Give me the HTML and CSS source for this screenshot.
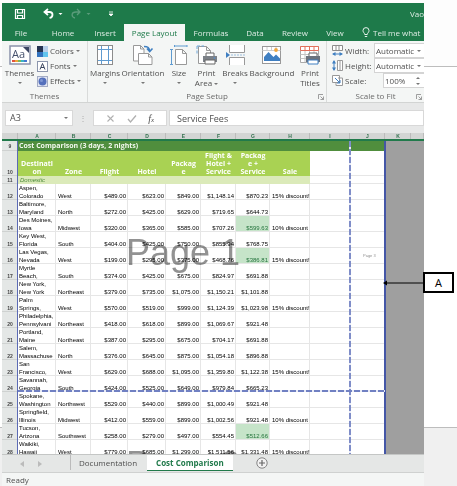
FILE: index.html
```html
<!DOCTYPE html>
<html lang="en">
<head>
<meta charset="utf-8">
<title>Cost Comparison</title>
<link rel="stylesheet" href="styles.css">
</head>
<body>
<div class="app">
  <header class="titlebar">
    <button class="qat save" aria-label="Save"><svg width="12" height="12" viewBox="0 0 12 12"><path d="M1.500 1.500h9v9h-9zM3.500 1.500v3.500h5v-3.500M3.500 10.500v-3h5v3" fill="none" stroke="#fff" stroke-width="1.200"/></svg></button>
    <button class="qat undo" aria-label="Undo"><svg width="20" height="12" viewBox="0 0 20 12"><path d="M5 1L1.500 4 5 7M2 4h4.500c4 0 4 5 0 6" fill="none" stroke="#fff" stroke-width="1.800"/><path d="M15.500 5h4l-2 2z" fill="#fff"/></svg></button>
    <button class="qat redo" aria-label="Redo"><svg width="20" height="12" viewBox="0 0 20 12"><path d="M6 1l3 3-3 3M9 4H5C0 4 0 9 4 10" fill="none" stroke="#5b9c7b" stroke-width="1.300"/><path d="M15.500 5h4l-2 2z" fill="#5b9c7b"/></svg></button>
    <button class="qat more" aria-label="Customize"><svg width="6" height="8" viewBox="0 0 6 8"><path d="M1 2h4M1 4h4l-2 2z" fill="#fff" stroke="#fff" stroke-width=".8"/></svg></button>
    <span class="doc-title">Vao</span>
  </header>
  <nav class="tabs">
    <a href="#" class="w38">File</a>
    <a href="#" class="w46">Home</a>
    <a href="#" class="w38">Insert</a>
    <a href="#" class="w61 current">Page Layout</a>
    <a href="#" class="w52">Formulas</a>
    <a href="#" class="w36">Data</a>
    <a href="#" class="w44">Review</a>
    <a href="#" class="w36">View</a>
    <a href="#" class="tell"><svg width="8" height="11" viewBox="0 0 8 11"><path d="M2.700 7.500C2.700 6 1 5.500 1 3.600a3 3 0 0 1 6 0C7 5.500 5.300 6 5.300 7.500zM2.800 9.500h2.400" fill="none" stroke="#e6f1eb"/></svg>Tell me what</a>
  </nav>

  <section class="ribbon">
    <div class="group themes">
      <div class="group-body">
        <button class="big"><svg width="22" height="20" viewBox="0 0 22 20"><rect x="1" y="1" width="20" height="18" fill="#fff" stroke="#8b93aa" stroke-width="1.500"/><path d="M14 2h6v6z" fill="#3b4562"/><text x="3" y="13" class="aa">Aa</text><path d="M3 16h3" stroke="#e0523f" stroke-width="2"/><path d="M6 16h3" stroke="#eda63a" stroke-width="2"/><path d="M9 16h3" stroke="#7cb560" stroke-width="2"/><path d="M12 16h3" stroke="#3bb3c4" stroke-width="2"/><path d="M15 16h3" stroke="#4877cf" stroke-width="2"/></svg><span>Themes</span><i class="caret"></i></button>
        <div class="stack">
          <button class="small"><svg width="11" height="11" viewBox="0 0 11 11"><path d="M0 0h6v6H0z" fill="#263451"/><path d="M6 0h5v6H6z" fill="#b8cfe9"/><path d="M0 6h6v5H0z" fill="#3474bf"/><path d="M6 6h5v5H6z" fill="#62c5ee"/></svg>Colors<i class="caret"></i></button>
          <button class="small"><svg width="11" height="11" viewBox="0 0 11 11"><rect x=".5" y=".5" width="10" height="10" fill="#fff" stroke="#8c96ad"/><path d="M3 8.500L5.500 2.500 8 8.500M4 6.500h3" fill="none" stroke="#39445d"/></svg>Fonts<i class="caret"></i></button>
          <button class="small"><svg width="11" height="11" viewBox="0 0 11 11"><rect x=".5" y=".5" width="10" height="10" fill="#e4e8f4" stroke="#a3abc4"/><circle cx="5.500" cy="5.500" r="4" fill="#5470bc"/><circle cx="4.500" cy="4.500" r="1.500" fill="#7f97d4"/></svg>Effects<i class="caret"></i></button>
        </div>
      </div>
      <div class="group-name">Themes</div>
    </div>

    <div class="group setup">
      <div class="group-body setup-grid">
        <button class="big"><svg width="16" height="20" viewBox="0 0 16 20"><rect x=".5" y=".5" width="15" height="19" fill="#fff" stroke="#8c8c8c"/><path d="M4.500 1v18M11.500 1v18M1 4.500h14M1 15.500h14" stroke="#5f9bd0"/></svg><span>Margins</span><i class="caret"></i></button>
        <button class="big"><svg width="22" height="20" viewBox="0 0 22 20"><path d="M1.500 .5h7l3.500 3.500v12H1.500zM8.500 .5V4H12" fill="#fff" stroke="#999"/><path d="M6.500 8.500h10l3.500 3.500v7.500H6.500zM16.500 8.500V12H20" fill="#fff" stroke="#999"/><path d="M12 1.500c4 0 5.500 1 5.500 4.500M15 3.500l2.700 3 2.800-3" fill="none" stroke="#3f7fc1" stroke-width="1.600"/></svg><span>Orientation</span><i class="caret"></i></button>
        <button class="big"><svg width="18" height="20" viewBox="0 0 18 20"><path d="M5.500 4.500h7l4 4v11h-11zM12.500 4.500v4h4" fill="#fff" stroke="#999"/><path d="M5 1h12M4.500 0v2M17 0v2M1.500 5v15M0 4.500h3M0 19.500h3" stroke="#5f9bd0"/></svg><span>Size</span><i class="caret"></i></button>
        <button class="big"><svg width="22" height="20" viewBox="0 0 22 20"><path d="M2.500 1.500h8l4 4v13h-12zM10.500 1.500v4h4" fill="#fff" stroke="#999"/><path d="M1 1v8M1 1h7" stroke="#6fa6d8" stroke-dasharray="3 1.500"/><path d="M10 8h8v4h-8z" fill="#fff" stroke="#666"/><path d="M7 11h14v6H7z" fill="#7c8188"/><path d="M9 15h10v4H9z" fill="#fff" stroke="#666"/><circle cx="18.500" cy="13" r=".8" fill="#4b8fd6"/></svg><span>Print</span><span>Area <i class="caret"></i></span></button>
        <button class="big"><svg width="19" height="20" viewBox="0 0 19 20"><path d="M3.500 0v7.500h15V0M3.500 20v-7.500h15V20" fill="#fff" stroke="#999"/><path d="M5 10h14" stroke="#9bbede" stroke-dasharray="2 1"/><path d="M0 7l4 3-4 3z" fill="#3f7fc1"/></svg><span>Breaks</span><i class="caret"></i></button>
        <button class="big"><svg width="20" height="20" viewBox="0 0 20 20"><rect x=".5" y="1.500" width="18" height="17" fill="#fff" stroke="#999"/><path d="M.5 5.500h18M5 2v4M9.500 2v4M14 2v4" stroke="#ccc"/><path d="M2 16v-4l4.500-5 5 5 2.500-2.500 4 4V16z" fill="#3f7fc1"/><circle cx="14" cy="5" r="1.900" fill="#f0a53b"/></svg><span>Background</span></button>
        <button class="big"><svg width="22" height="20" viewBox="0 0 22 20"><path d="M1.500 1.500h18v16h-18z" fill="#fff" stroke="#aaa"/><path d="M1.500 1.500h18v4h-18zM6 1.500v4M10.500 1.500v4M15 1.500v4" fill="#fff" stroke="#e2705c"/><path d="M1.500 9.500h18M1.500 13.500h18M6 6v11M10.500 6v11M15 6v11" stroke="#c4c4c4"/><path d="M10 8h8v4h-8z" fill="#fff" stroke="#666"/><path d="M7 11h14v6H7z" fill="#6c737d"/><path d="M9 15h10v4H9z" fill="#fff" stroke="#3f7fc1"/></svg><span>Print</span><span>Titles</span></button>
      </div>
      <div class="group-name">Page Setup<svg class="launcher" width="6" height="6" viewBox="0 0 6 6"><path d="M.5 5V.5H5M2.500 2.500l3 3M5.500 2.500v3h-3" fill="none" stroke="#888" stroke-width=".8"/></svg></div>
    </div>

    <div class="group scale">
      <div class="group-body scale-rows">
        <div class="field"><label for="width"><svg width="11" height="11" viewBox="0 0 11 11"><path d="M.5 .5h10v5H.5zM4 1v4M7 1v4" fill="#fff" stroke="#8c8c8c"/><path d="M1 9h9" stroke="#3f7fc1"/><path d="M3.500 7v4L0 9zM7.500 7v4L11 9z" fill="#3f7fc1"/></svg>Width:</label><span class="pick"><select id="width"><option>Automatic</option></select><i class="caret"></i></span></div>
        <div class="field"><label for="height"><svg width="11" height="11" viewBox="0 0 11 11"><path d="M5.500 .5h5v10h-5zM8 1v9" fill="#fff" stroke="#999"/><path d="M2 1v9" stroke="#3f7fc1"/><path d="M0 3.500h4L2 0zM0 7.500h4L2 11z" fill="#3f7fc1"/></svg>Height:</label><span class="pick"><select id="height"><option>Automatic</option></select><i class="caret"></i></span></div>
        <div class="field"><label for="scale"><svg width="11" height="11" viewBox="0 0 11 11"><path d="M.5 .5h7v7h-7zM6 3h4.500v7.500H4V8" fill="#fff" stroke="#999"/><path d="M3 3l5 5M8 5v3H5" fill="none" stroke="#3f7fc1"/></svg>Scale:</label><span class="pick spin"><input id="scale" value="100%"><span class="arrows"><i class="caret up"></i><i class="caret"></i></span></span></div>
      </div>
      <div class="group-name">Scale to Fit<svg class="launcher" width="6" height="6" viewBox="0 0 6 6"><path d="M.5 5V.5H5M2.500 2.500l3 3M5.500 2.500v3h-3" fill="none" stroke="#888" stroke-width=".8"/></svg></div>
    </div>
  </section>

  <section class="formula-bar">
    <span class="box name-box"><input aria-label="Name box" value="A3"><i class="caret"></i></span>
    <span class="dots">⋮</span>
    <span class="box fx"><svg width="9" height="9" viewBox="0 0 9 9"><path d="M1.500 1.500l6 6M7.500 1.500l-6 6" stroke="#b0b0b0" stroke-width="1.100"/></svg><svg width="10" height="9" viewBox="0 0 10 9"><path d="M1 5l2.500 3L9 1.500" fill="none" stroke="#b0b0b0" stroke-width="1.300"/></svg><em>f<small>x</small></em></span>
    <input class="box formula" aria-label="Formula" value="Service Fees">
  </section>

  <main class="sheet">
    <table>
      <colgroup><col class="c16"><col class="c38"><col class="c35"><col class="c37"><col class="c38"><col class="c35"><col class="c35"><col class="c34"><col class="c40"><col class="c40"><col class="c35"><col class="c26"><col></colgroup>
      <thead>
        <tr><th></th><th>A</th><th>B</th><th>C</th><th>D</th><th>E</th><th>F</th><th>G</th><th>H</th><th>I</th><th>J</th><th>K</th><th></th></tr>
      </thead>
      <tbody>
        <tr class="title"><th>9</th><td colspan="10">Cost Comparison (3 days, 2 nights)</td><td class="off"></td><td class="off"></td></tr>
        <tr class="heads"><th>10</th><td>Destinati<br>on</td><td>Zone</td><td>Flight</td><td>Hotel</td><td>Packag<br>e</td><td>Flight &amp;<br>Hotel +<br>Service</td><td>Packag<br>e +<br>Service</td><td>Sale</td><td class="blank"></td><td class="blank"></td><td class="off"></td><td class="off"></td></tr>
        <tr class="section"><th>11</th><td colspan="8">Domestic</td><td class="blank"></td><td class="blank"></td><td class="off"></td><td class="off"></td></tr>
        <tr><th>12</th><td>Aspen,<br>Colorado</td><td>West</td><td>$489.00</td><td>$623.00</td><td>$849.00</td><td>$1,148.14</td><td>$870.23</td><td>15% discount!</td><td></td><td></td><td class="off"></td><td class="off"></td></tr>
        <tr><th>13</th><td>Baltimore,<br>Maryland</td><td>North</td><td>$272.00</td><td>$425.00</td><td>$629.00</td><td>$719.65</td><td>$644.73</td><td></td><td></td><td></td><td class="off"></td><td class="off"></td></tr>
        <tr><th>14</th><td>Des Moines,<br>Iowa</td><td>Midwest</td><td>$320.00</td><td>$365.00</td><td>$585.00</td><td>$707.26</td><td class="good">$599.63</td><td>10% discount</td><td></td><td></td><td class="off"></td><td class="off"></td></tr>
        <tr><th>15</th><td>Key West,<br>Florida</td><td>South</td><td>$404.00</td><td>$425.00</td><td>$750.00</td><td>$855.94</td><td>$768.75</td><td></td><td></td><td></td><td class="off"></td><td class="off"></td></tr>
        <tr><th>16</th><td>Las Vegas,<br>Nevada</td><td>West</td><td>$199.00</td><td>$295.00</td><td>$375.00</td><td>$468.76</td><td class="good">$386.81</td><td>15% discount!</td><td></td><td></td><td class="off"></td><td class="off"></td></tr>
        <tr><th>17</th><td>Myrtle<br>Beach,</td><td>South</td><td>$374.00</td><td>$425.00</td><td>$675.00</td><td>$824.97</td><td>$691.88</td><td></td><td></td><td></td><td class="off"></td><td class="off"></td></tr>
        <tr><th>18</th><td>New York,<br>New York</td><td>Northeast</td><td>$379.00</td><td>$735.00</td><td>$1,075.00</td><td>$1,150.21</td><td>$1,101.88</td><td></td><td></td><td></td><td class="off"></td><td class="off"></td></tr>
        <tr><th>19</th><td>Palm<br>Springs,</td><td>West</td><td>$570.00</td><td>$519.00</td><td>$999.00</td><td>$1,124.39</td><td>$1,023.98</td><td>15% discount!</td><td></td><td></td><td class="off"></td><td class="off"></td></tr>
        <tr><th>20</th><td>Philadelphia,<br>Pennsylvani</td><td>Northeast</td><td>$418.00</td><td>$618.00</td><td>$899.00</td><td>$1,069.67</td><td>$921.48</td><td></td><td></td><td></td><td class="off"></td><td class="off"></td></tr>
        <tr><th>21</th><td>Portland,<br>Maine</td><td>Northeast</td><td>$387.00</td><td>$295.00</td><td>$675.00</td><td>$704.17</td><td>$691.88</td><td></td><td></td><td></td><td class="off"></td><td class="off"></td></tr>
        <tr><th>22</th><td>Salem,<br>Massachuse</td><td>North</td><td>$376.00</td><td>$645.00</td><td>$875.00</td><td>$1,054.18</td><td>$896.88</td><td></td><td></td><td></td><td class="off"></td><td class="off"></td></tr>
        <tr><th>23</th><td>San<br>Francisco,</td><td>West</td><td>$629.00</td><td>$688.00</td><td>$1,095.00</td><td>$1,359.80</td><td>$1,122.38</td><td>15% discount!</td><td></td><td></td><td class="off"></td><td class="off"></td></tr>
        <tr><th>24</th><td>Savannah,<br>Georgia</td><td>South</td><td>$424.00</td><td>$525.00</td><td>$649.00</td><td>$979.84</td><td>$665.23</td><td></td><td></td><td></td><td class="off"></td><td class="off"></td></tr>
        <tr><th>25</th><td>Spokane,<br>Washington</td><td>Northwest</td><td>$529.00</td><td>$440.00</td><td>$899.00</td><td>$1,000.49</td><td>$921.48</td><td></td><td></td><td></td><td class="off"></td><td class="off"></td></tr>
        <tr><th>26</th><td>Springfield,<br>Illinois</td><td>Midwest</td><td>$412.00</td><td>$559.00</td><td>$899.00</td><td>$1,002.56</td><td>$921.48</td><td>10% discount</td><td></td><td></td><td class="off"></td><td class="off"></td></tr>
        <tr><th>27</th><td>Tucson,<br>Arizona</td><td>Southwest</td><td>$258.00</td><td>$279.00</td><td>$497.00</td><td>$554.45</td><td class="good">$512.66</td><td></td><td></td><td></td><td class="off"></td><td class="off"></td></tr>
        <tr><th>28</th><td>Waikiki,<br>Hawaii</td><td>West</td><td>$779.00</td><td>$685.00</td><td>$1,299.00</td><td>$1,511.56</td><td>$1,331.48</td><td>15% discount!</td><td></td><td></td><td class="off"></td><td class="off"></td></tr>
      </tbody>
    </table>
    <span class="watermark first">Page 1</span>
    <span class="watermark second">Page 2</span>
    <span class="watermark third">Page 3</span>
    <span class="break edge-left"></span>
    <span class="break edge-right"></span>
    <span class="break dash-v"></span>
    <span class="break dash-h"></span>
  </main>

  <nav class="sheet-tabs">
    <button class="arrow" aria-label="Previous sheet"><svg width="4" height="6" viewBox="0 0 4 6"><path d="M4 0v6L0 3z" fill="#bbb"/></svg></button>
    <button class="arrow" aria-label="Next sheet"><svg width="4" height="6" viewBox="0 0 4 6"><path d="M0 0v6l4-3z" fill="#bbb"/></svg></button>
    <a href="#" class="doc-tab">Documentation</a>
    <a href="#" class="active-tab">Cost Comparison</a>
    <button class="add" aria-label="New sheet"><svg width="12" height="12" viewBox="0 0 12 12"><circle cx="6" cy="6" r="5.200" fill="#f2f2f2" stroke="#858585"/><path d="M6 3v6M3 6h6" stroke="#666" stroke-width="1.200"/></svg></button>
  </nav>
  <footer class="status">Ready</footer>
</div>
<div class="callout"><svg width="40" height="8" viewBox="0 0 40 8"><path d="M3 4h37" stroke="#000"/><path d="M0 4l4-2.500v5z"/></svg><span>A</span></div>
</body>
</html>
```

FILE: styles.css
```css
* { box-sizing: border-box; }

body {
  margin: 0;
  padding: 3px 33px 0 2px;
  height: 100vh;
  overflow: hidden;
  position: relative;
  font: 8px/10px "Open Sans", sans-serif;
  color: #505050;
  background: linear-gradient(#fdfdfd 66px, #bdbdbd 66px 67px, #fff 67px 427px, #bdbdbd 427px 428px, #f0f0f0 428px);
}

button, input, select {
  font: inherit;
  color: inherit;
  background: none;
  border: 0;
  padding: 0;
  margin: 0;
  min-width: 0;
  appearance: none;
  outline: 0;
}
a { color: inherit; text-decoration: none; }
svg { display: block; flex: none; }

.app {
  height: 100%;
  display: flex;
  flex-direction: column;
  overflow: hidden;
}
.app > * { flex: none; }

.caret {
  display: inline-block;
  flex: none;
  border: 2px solid transparent;
  border-top-color: #777;
  border-bottom: 0;
}
.caret.up {
  border-top: 0;
  border-bottom: 2px solid #777;
}

/* Title bar and ribbon tabs */
.titlebar {
  height: 21px;
  background: #1e7a4a;
  display: flex;
  align-items: center;
  padding-left: 12px;
  color: #dcebe3;
}
.qat { margin-right: 12px; }
.undo, .redo { margin-left: 5px; margin-right: 5px; }
.redo { margin-left: 3px; }
.more { margin-left: 12px; }
.doc-title { margin-left: auto; }

.tabs {
  height: 17px;
  background: #1e7a4a;
  color: #dcebe3;
  display: flex;
  line-height: 17px;
  white-space: nowrap;
  overflow: hidden;
}
.tabs a { text-align: center; flex: none; }
.tabs .current { background: #f4f6f5; color: #1e7a4a; }
.w36 { width: 36px; }
.w38 { width: 38px; }
.w44 { width: 44px; }
.w46 { width: 46px; }
.w52 { width: 52px; }
.w61 { width: 61px; }
.tabs .tell {
  display: flex;
  align-items: center;
  gap: 3px;
  padding-left: 9px;
}

/* Ribbon */
.ribbon {
  height: 62px;
  display: flex;
  background: #f4f6f5;
  border-bottom: 1px solid #d2d4d3;
}
.group {
  display: flex;
  flex-direction: column;
  justify-content: space-between;
  padding: 3px 0 1px;
}
.group + .group { border-left: 1px solid #d9dbda; }
.themes { width: 85px; }
.setup { width: 239px; }
.scale { flex: 1; min-width: 0; overflow: hidden; }
.group-body { display: flex; }
.group-name {
  position: relative;
  text-align: center;
  color: #6a6a6a;
}
.launcher { position: absolute; right: 2px; top: 3px; }
.big {
  display: flex;
  flex-direction: column;
  align-items: center;
  white-space: nowrap;
}
.big > span { line-height: 10px; }
.big svg { margin: 1px 0 3px; }
.big > .caret { margin-top: 4px; }
.big span .caret { vertical-align: middle; }
.themes .big { width: 35px; }
.stack { display: flex; flex-direction: column; gap: 1px; }
.small { display: flex; align-items: center; gap: 2px; height: 14px; }
.aa { font: 11px "Open Sans", sans-serif; fill: #44506c; }
.setup-grid {
  display: grid;
  grid-template-columns: 30px 46px 26px 29px 28px 46px 30px;
  padding-left: 2px;
  align-items: start;
}
.scale-rows { flex-direction: column; margin-top: -1px; }
.field {
  display: flex;
  justify-content: space-between;
  height: 15px;
  padding-left: 5px;
}
.field label { display: flex; align-items: center; gap: 2px; }
.pick {
  display: flex;
  align-items: center;
  gap: 3px;
  width: 50px;
  padding-left: 1px;
  background: #fff;
  border: 1px solid #d4d4d4;
  border-right: 0;
}
.pick select { width: 38px; flex: none; }
.spin { width: 41px; }
.spin input { width: 24px; }
.arrows { display: flex; flex-direction: column; gap: 4px; margin-left: 4px; }

/* Formula bar */
.formula-bar {
  height: 30px;
  padding: 7px 0;
  display: flex;
  background: #e7e8e8;
}
.box {
  height: 16px;
  background: #fff;
  border: 1px solid #d8d8d8;
  display: flex;
  align-items: center;
}
.name-box {
  width: 68px;
  margin-left: 3px;
  padding: 0 4px;
  justify-content: space-between;
  font-size: 9px;
}
.name-box input { width: 40px; }
.dots { width: 20px; text-align: center; line-height: 16px; color: #aaa; }
.fx { width: 74px; justify-content: space-evenly; }
.fx em { font: italic 10px "Liberation Serif", serif; }
.fx small { font-size: 7px; }
.formula { flex: 1; margin-left: 2px; padding-left: 7px; font-size: 9px; }

/* Worksheet */
.app > .sheet {
  position: relative;
  flex: 1 1 0;
  min-height: 0;
  overflow: hidden;
  background: #fff;
}
table {
  width: 100%;
  table-layout: fixed;
  border-collapse: separate;
  border-spacing: 0;
  font: 6px/8px "Liberation Sans", sans-serif;
  color: #000;
}
.c16 { width: 16px; }
.c26 { width: 26px; }
.c34 { width: 34px; }
.c35 { width: 35px; }
.c37 { width: 37px; }
.c38 { width: 38px; }
.c40 { width: 40px; }
th, td {
  padding: 0 1px;
  height: 16px;
  vertical-align: bottom;
  white-space: nowrap;
  overflow: hidden;
}
td { box-shadow: inset -1px -1px #e6e6e6; }
td:nth-child(3) { padding-left: 2px; }
td:nth-child(n+4):nth-child(-n+8) { text-align: right; padding-right: 2px; }
td:nth-child(9) { padding-left: 2px; }
thead th {
  height: 8px;
  line-height: 6px;
  font-size: 5px;
  color: #33714f;
  background: #d3d5d4;
  border-bottom: 2px solid #217a4b;
  box-shadow: inset -1px 0 #bbb;
}
tbody th {
  font-size: 5px;
  color: #444;
  background: #e4e7e6;
  box-shadow: inset -1px -1px #cfd2d1;
}
tbody td.off { background: #9f9f9f; box-shadow: none; }
td.good { background: #c6e4c9; color: #24733c; }
.title th, .title td { height: 10px; line-height: 10px; }
.title td { font: bold 7px/10px "Open Sans", sans-serif; }
.title td:nth-child(2) { background: #508e3d; color: #f2f8ee; box-shadow: none; }
.heads th, .heads td { height: 25px; }
.heads td {
  font: bold 7px/8px "Open Sans", sans-serif;
  color: #fff;
  background: #a9d253;
  box-shadow: none;
}
.heads td:nth-child(n) { text-align: center; padding: 0; }
.section th, .section td { height: 8px; }
.section td { background: #dbeab9; box-shadow: none; }
.section td:nth-child(2) { font-style: italic; color: #4c8a3b; padding-left: 2px; }
.heads td.blank, .section td.blank { background: #fff; box-shadow: inset -1px -1px #e6e6e6; }

/* Page-break preview overlay */
.watermark {
  position: absolute;
  font-family: "Liberation Sans", sans-serif;
  color: #929292;
  mix-blend-mode: multiply;
  white-space: nowrap;
}
.first, .second { left: 124px; font-size: 36px; line-height: 36px; }
.first { top: 102px; }
.second { top: 314px; }
.third { left: 361px; top: 120px; font-size: 4px; line-height: 6px; }
.break { position: absolute; }
.edge-left { left: 15px; top: 8px; bottom: 0; width: 1px; background: #5c6bb5; }
.edge-right { left: 382px; top: 8px; bottom: 0; width: 2px; background: #4456a6; }
.dash-v {
  left: 347px; top: 8px; bottom: 0; width: 2px;
  background: repeating-linear-gradient(#7f8dc8 0 6px, #e8ebf6 6px 8px);
}
.dash-h {
  left: 16px; top: 257px; width: 367px; height: 2px;
  background: repeating-linear-gradient(90deg, #7080c2 0 6px, #e8ebf6 6px 8px);
}

/* Sheet tabs and status */
.sheet-tabs {
  height: 19px;
  display: flex;
  align-items: flex-start;
  background: #e5e7e6;
  border-top: 1px solid #c4c6c5;
  border-bottom: 1px solid #cfd1d0;
  line-height: 15px;
}
.arrow { width: 18px; height: 17px; display: flex; align-items: center; justify-content: center; }
.arrow:first-child { margin-left: 11px; }
.doc-tab { margin-left: 21px; padding: 0 10px 0 8px; border-left: 1px solid #bbb; }
.active-tab {
  padding: 0 9px;
  height: 16px;
  background: #fff;
  color: #217a4b;
  border-bottom: 1px solid #217a4b;
  font-weight: bold;
}
.add { margin: 2px 0 0 23px; }
.status {
  height: 13px;
  padding-left: 4px;
  line-height: 13px;
  background: #f4f6f5;
}

/* Callout pointing at the page edge */
.callout {
  position: absolute;
  right: 3px;
  top: 272px;
  display: flex;
  align-items: center;
}
.callout span {
  width: 31px;
  height: 21px;
  border: 2px solid #000;
  background: #fff;
  color: #000;
  font: 11px/17px "Open Sans", sans-serif;
  text-align: center;
}
```
